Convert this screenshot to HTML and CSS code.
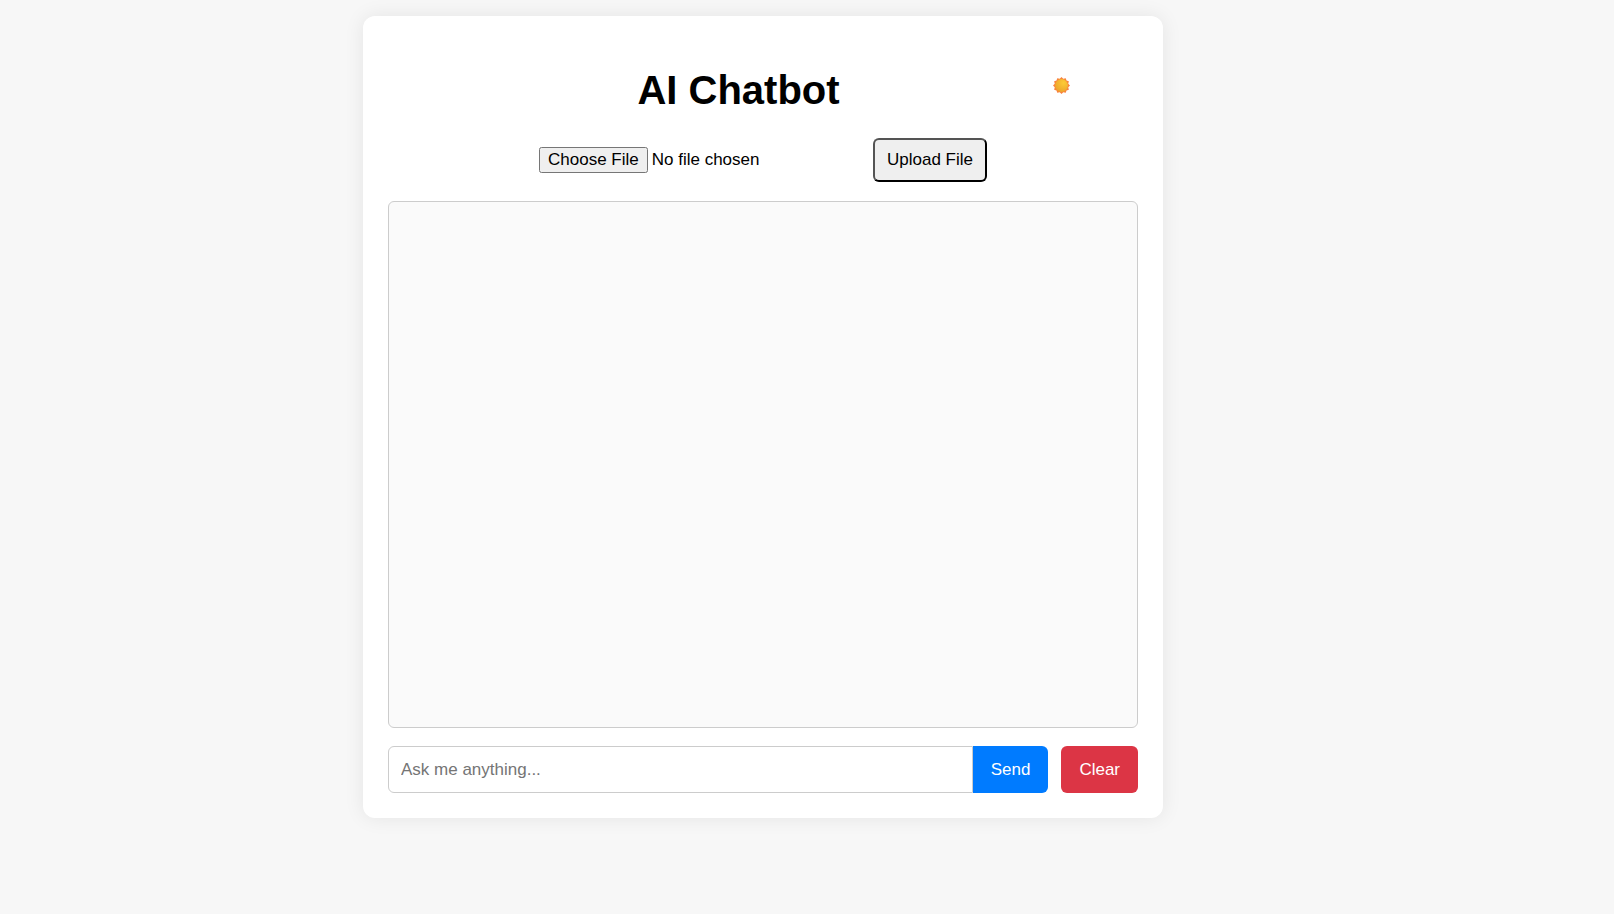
FILE: index.html
```html
<!DOCTYPE html>
<html lang="en">
<head>
<meta charset="utf-8">
<meta name="viewport" content="width=device-width, initial-scale=1">
<title>AI Chatbot</title>
<link rel="stylesheet" href="styles.css">
</head>
<body>
<main class="card">
  <header class="header">
    <h1 class="title">AI Chatbot</h1>
    <button class="theme" type="button" aria-label="Toggle theme">
      <svg class="sun" viewBox="0 0 34 34" aria-hidden="true">
        <defs><radialGradient id="disc" cx=".65" cy=".3" r=".8"><stop offset="0" stop-color="#fccb36"/><stop offset="1" stop-color="#eba02a"/></radialGradient></defs>
        <path fill="#f9823c" d="M17 0l3.500 3.500L25.500 2.300 27 7l4.700 1.500L30.500 13.500 34 17l-3.500 3.500 1.200 5L27 27l-1.500 4.700-5-1.200L17 34l-3.500-3.500-5 1.200L7 27l-4.700-1.500 1.200-5L0 17l3.500-3.500-1.200-5L7 7l1.500-4.700 5 1.200z"/>
        <circle cx="17" cy="17" r="13" fill="url(#disc)"/>
      </svg>
    </button>
  </header>
  <form class="upload">
    <input class="file" type="file" aria-label="File to upload">
    <button class="upload-button" type="button">Upload File</button>
  </form>
  <section class="chat" aria-label="Conversation"></section>
  <form class="composer">
    <input class="message" type="text" placeholder="Ask me anything..." aria-label="Message">
    <button class="send" type="button">Send</button>
    <button class="clear" type="button">Clear</button>
  </form>
</main>
</body>
</html>
```
FILE: styles.css
```css
* {
  box-sizing: border-box;
}

body {
  margin: 0;
  padding: 16px 88px 16px 0;
  background: #f7f7f7;
  color: #000;
  font-family: "Liberation Sans", Arial, sans-serif;
  font-size: 17px;
  line-height: 20px;
}

button,
input {
  font: inherit;
}

.card {
  max-width: 800px;
  margin: 0 auto;
  padding: 25px;
  border-radius: 12px;
  background: #fff;
  box-shadow: 0 0 20px rgba(0, 0, 0, 0.08);
}

.header {
  display: grid;
  grid-template-columns: 1fr auto 1fr;
  align-items: center;
  padding: 25px 49px 24px 0;
}

.title {
  grid-column: 2;
  margin: 0;
  font-size: 40px;
  line-height: 48px;
}

.theme {
  justify-self: end;
  display: flex;
  margin-bottom: 10px;
  padding: 10px 19px;
  border: 0;
  background: transparent;
}

.sun {
  width: 17px;
  height: 17px;
}

.upload {
  display: flex;
  justify-content: center;
  align-items: center;
  gap: 10px;
  margin-bottom: 19px;
}

.file {
  width: 324px;
  min-width: 0;
}

.file::file-selector-button {
  padding: 1px 7px;
}

.upload-button {
  padding: 10px 12px;
  border: 2px outset #000;
  border-radius: 6px;
  background: #efefef;
  color: #000;
}

.chat {
  min-height: 527px;
  margin-bottom: 18px;
  border: 1px solid #ccc;
  border-radius: 6px;
  background: #fafafa;
}

.composer {
  display: flex;
}

.message {
  flex: 1;
  min-width: 0;
  padding: 12px;
  border: 1px solid #ccc;
  border-radius: 6px 0 0 6px;
  background: #fff;
}

.message::placeholder {
  color: #757575;
}

.send,
.clear {
  padding: 13px 18px;
  border: 0;
  color: #fff;
  line-height: 21px;
}

.send {
  border-radius: 0 6px 6px 0;
  background: #007bff;
}

.clear {
  margin-left: 13px;
  border-radius: 6px;
  background: #dc3545;
}
```
